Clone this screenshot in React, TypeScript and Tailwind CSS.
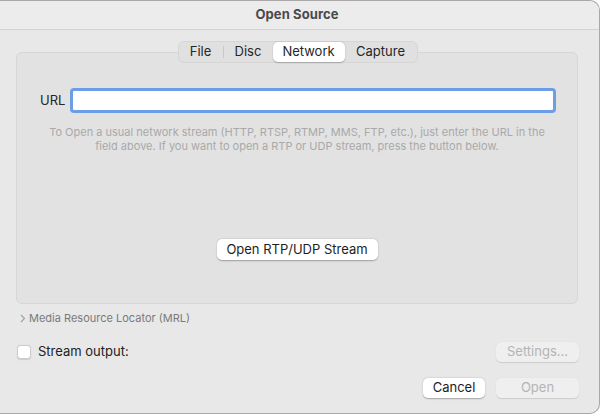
export default function App() {
  const tabs = [
    { label: "File", w: "w-[44px]" },
    { label: "Disc", w: "w-[49px]" },
    { label: "Network", w: "w-[72px]", active: true },
    { label: "Capture", w: "w-[72px]" },
  ];

  return (
    <div className="w-[601px] h-[414px] bg-white font-['Inter','Liberation_Sans',sans-serif] text-[13px] text-[#262626] overflow-hidden">
      <div className="w-[600px] h-[414px] bg-[#e8e8e8] rounded-tr-[10px] rounded-br-[10px] border-r border-t border-b border-[#a8a8a8] flex flex-col">
        {/* Title bar */}
        <div className="h-[29px] shrink-0 bg-[#ececec] rounded-tr-[10px] border-b border-[#d2d2d2] flex items-center justify-center pr-[5px]">
          <span className="font-bold text-[13px] text-[#4a4a4a] tracking-[0.1px]">Open Source</span>
        </div>

        <div className="flex flex-col pl-[16px] pr-[20px] pt-[11px]">
          {/* Tabs */}
          <div className="relative z-10 self-center flex items-center h-[22px] rounded-[6px] bg-[#e0e0e0] border border-[#d6d6d6]">
            {tabs.map((t, i) => (
              <div key={t.label} className="flex items-center">
                {i === 1 && <div className="w-px h-[12px] bg-[#c9c9c9]" />}
                <div
                  className={
                    t.active
                      ? `${t.w} h-[20px] flex items-center justify-center rounded-[5px] bg-white shadow-[0_0.5px_1.5px_rgba(0,0,0,0.25)]`
                      : `${t.w} h-[20px] flex items-center justify-center`
                  }
                >
                  {t.label}
                </div>
              </div>
            ))}
          </div>

          {/* Group box */}
          <div className="-mt-[11px] mr-px h-[252px] rounded-[6px] bg-[#e2e2e2] border border-[#d6d6d6] flex flex-col">
            <div className="mt-[35px] flex items-center pl-[23px] pr-[21px]">
              <span className="w-[30px] text-[13px] text-[#262626]">URL</span>
              <div className="flex-1 h-[25px] rounded-[4px] border-[3px] border-[#6e9de8] bg-white" />
            </div>
            <p className="mt-[12px] px-[20px] text-center text-[11px] leading-[14px] text-[#a9a9a9]">
              To Open a usual network stream (HTTP, RTSP, RTMP, MMS, FTP, etc.), just enter the URL in the
              <br />
              field above. If you want to open a RTP or UDP stream, press the button below.
            </p>
            <div className="mt-[86px] flex justify-center">
              <button className="w-[161px] h-[21px] rounded-[5px] bg-white text-[13px] text-[#1e1e1e] shadow-[0_0.5px_1.5px_rgba(0,0,0,0.3)]">
                Open RTP/UDP Stream
              </button>
            </div>
          </div>

          {/* MRL disclosure */}
          <div className="mt-[7px] h-[14px] flex items-center gap-[3px] pl-[4px] text-[11px] text-[#7a7a7a]">
            <svg width="6" height="9" viewBox="0 0 6 9" fill="none">
              <path d="M1 1l3.5 3.5L1 8" stroke="#a0a0a0" strokeWidth="1.1" />
            </svg>
            <span>Media Resource Locator (MRL)</span>
          </div>

          {/* Stream output */}
          <div className="mt-[17px] h-[20px] flex items-center justify-between">
            <div className="flex items-center gap-[7px] pl-px">
              <div className="w-[14px] h-[14px] rounded-[3.5px] bg-white border border-[#cbcbcb] shadow-[0_0.5px_1px_rgba(0,0,0,0.12)]" />
              <span className="text-[13px] text-[#222]">Stream output:</span>
            </div>
            <button className="w-[83px] h-[20px] rounded-[5px] bg-[#efefef] text-[13px] text-[#b4b4b4] shadow-[0_0.5px_1px_rgba(0,0,0,0.12)]">
              Settings...
            </button>
          </div>

          {/* Dialog buttons */}
          <div className="mt-[16px] h-[20px] flex items-center justify-end gap-[11px]">
            <button className="w-[62px] h-[20px] rounded-[5px] bg-white text-[13px] text-[#1e1e1e] shadow-[0_0.5px_1.5px_rgba(0,0,0,0.3)]">
              Cancel
            </button>
            <button className="w-[83px] h-[20px] rounded-[5px] bg-[#efefef] text-[13px] text-[#b4b4b4] shadow-[0_0.5px_1px_rgba(0,0,0,0.12)]">
              Open
            </button>
          </div>
        </div>
      </div>
    </div>
  );
}
